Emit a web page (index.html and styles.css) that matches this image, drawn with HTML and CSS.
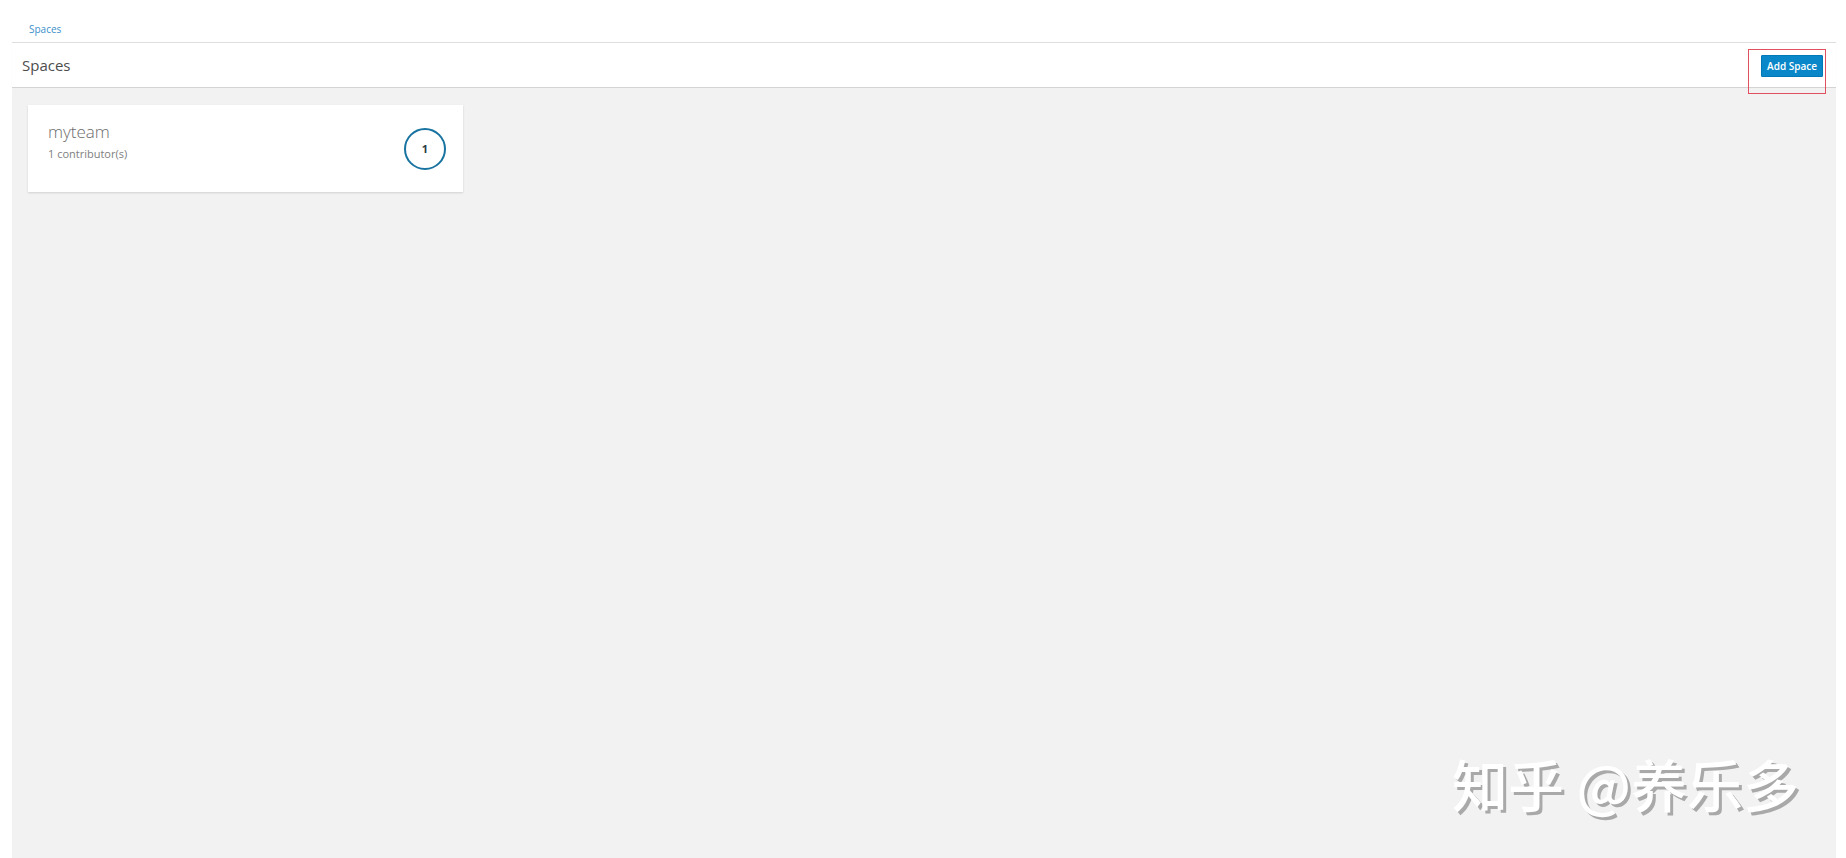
FILE: index.html
```html
<!DOCTYPE html>
<html lang="en">
<head>
  <meta charset="UTF-8">
  <meta name="viewport" content="width=device-width, initial-scale=1.0">
  <title>Spaces</title>
  <link rel="stylesheet" href="styles.css">
</head>
<body>
  <div class="page">
    <div class="breadcrumb">
      <a href="#" class="crumb">Spaces</a>
    </div>
    <div class="toolbar">
      <h1 class="title">Spaces</h1>
      <div class="actions">
        <button type="button" class="btn-primary">Add Space</button>
      </div>
    </div>
    <div class="content">
      <div class="space-card">
        <div class="space-info">
          <div class="space-name">myteam</div>
          <div class="space-meta">1 contributor(s)</div>
        </div>
        <div class="count-badge">1</div>
      </div>
    </div>
  </div>
  <div class="watermark">知乎 @养乐多</div>
</body>
</html>
```

FILE: styles.css
```css
body {
  margin: 0;
  background: #fff;
  font-family: 'Open Sans', 'Noto Sans', Arial, sans-serif;
  color: #363636;
}

.page {
  margin: 0 10px 0 12px;
  min-height: 858px;
  display: flex;
  flex-direction: column;
}

.breadcrumb {
  height: 43px;
  border-bottom: 1px solid #dedede;
  display: flex;
  align-items: flex-end;
  padding: 0 0 6px 17px;
  box-sizing: border-box;
}

.crumb {
  color: #3d8fc9;
  font-size: 10px;
  text-decoration: none;
}

.toolbar {
  height: 45px;
  border-bottom: 1px solid #d4d4d4;
  box-shadow: 0 1px 1px rgba(0, 0, 0, 0.05);
  display: flex;
  align-items: center;
  justify-content: space-between;
  padding: 0 13px 0 10px;
  box-sizing: border-box;
}

.title {
  margin: 0;
  font-size: 15px;
  font-weight: 400;
  color: #4d4d4d;
}

.actions {
  position: relative;
  margin-top: 1px;
}

/* red highlight box drawn around the button */
.actions::after {
  content: '';
  position: absolute;
  left: -13px;
  right: -3px;
  top: -6px;
  bottom: -17px;
  border: 1px solid #e0505f;
  pointer-events: none;
}

.btn-primary {
  display: block;
  height: 22px;
  padding: 0 5px;
  background: #0a87c9;
  border: 1px solid #0077b7;
  border-radius: 1px;
  color: #fff;
  font-family: 'Open Sans', Arial, sans-serif;
  font-size: 10px;
  font-weight: 600;
  cursor: pointer;
}

.content {
  flex: 1;
  background: #f2f2f2;
  padding: 17px 16px;
}

.space-card {
  width: 435px;
  height: 87px;
  box-sizing: border-box;
  background: #fff;
  box-shadow: 0 1px 2px rgba(0, 0, 0, 0.14);
  display: flex;
  align-items: flex-start;
  justify-content: space-between;
  padding: 16px 17px 0 20px;
}

.space-name {
  font-size: 17px;
  font-weight: 300;
  color: #6b6b6b;
  line-height: 22px;
}

.space-meta {
  font-size: 11px;
  color: #808080;
  margin-top: 3px;
}

.count-badge {
  align-self: center;
  width: 38px;
  height: 38px;
  border: 2px solid #1873a0;
  border-radius: 50%;
  display: flex;
  align-items: center;
  justify-content: center;
  font-size: 11px;
  font-weight: 700;
  color: #2b3a44;
  margin-top: -16px;
}

.watermark {
  position: absolute;
  left: 1452px;
  top: 742px;
  font-family: 'Noto Sans CJK SC', sans-serif;
  font-size: 56px;
  font-weight: 500;
  color: #fff;
  text-shadow: 3px 3px 0 #a9a9a9;
  white-space: nowrap;
}
```
